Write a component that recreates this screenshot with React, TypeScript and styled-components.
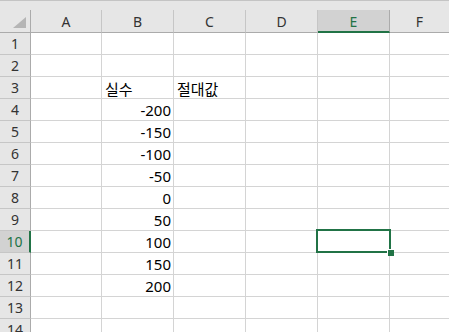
import React from "react";
import styled, {createGlobalStyle} from "styled-components";

const GlobalStyle = createGlobalStyle`
  html, body {
    margin: 0;
    padding: 0;
    background: #ffffff;
    overflow: hidden;
  }
`;

const GREEN = '#217346'

const columns = ['A', 'B', 'C', 'D', 'E', 'F']
const colWidths = [71, 72, 72, 72, 72, 60]

// row number -> values for B and C
const cells: { [row: number]: { B?: string, C?: string, header?: boolean } } = {
    3: {B: '실수', C: '절대값', header: true},
    4: {B: '-200'},
    5: {B: '-150'},
    6: {B: '-100'},
    7: {B: '-50'},
    8: {B: '0'},
    9: {B: '50'},
    10: {B: '100'},
    11: {B: '150'},
    12: {B: '200'},
}

const selectedRow = 10
const selectedCol = 'E'

const Sheet = styled.div`
  width: 449px;
  height: 332px;
  overflow: hidden;
  background: #ffffff;
  font-family: "Noto Sans", "Noto Sans CJK KR", sans-serif;
`;

const TopStrip = styled.div`
  height: 10px;
  background: #e6e6e6;
  border-top: 1px solid #c4c4c4;
  box-sizing: border-box;
`;

const Grid = styled.div`
  display: grid;
  grid-template-columns: 31px ${colWidths.map(w => w + 'px').join(' ')};
  grid-auto-rows: 22px;
  grid-template-rows: 23px;
`;

const Corner = styled.div`
  position: relative;
  background: #e6e6e6;
  border-right: 1px solid #ababab;
  border-bottom: 1px solid #ababab;
  box-sizing: border-box;

  &::after {
    content: '';
    position: absolute;
    right: 4px;
    bottom: 4px;
    width: 0;
    height: 0;
    border-left: 13px solid transparent;
    border-bottom: 11px solid #b5b5b5;
  }
`;

const ColHead = styled.div<{ $active?: boolean }>`
  display: flex;
  align-items: center;
  justify-content: center;
  background: ${p => p.$active ? '#d2d2d2' : '#e6e6e6'};
  border-right: 1px solid ${p => p.$active ? '#ababab' : '#c6c6c6'};
  border-bottom: ${p => p.$active ? `2px solid ${GREEN}` : '1px solid #ababab'};
  box-sizing: border-box;
  padding-top: ${p => p.$active ? '1px' : '0'};
  font-size: 14px;
  color: ${p => p.$active ? GREEN : '#333333'};
`;

const RowHead = styled.div<{ $active?: boolean }>`
  display: flex;
  align-items: center;
  justify-content: center;
  background: ${p => p.$active ? '#d2d2d2' : '#e6e6e6'};
  border-right: ${p => p.$active ? `2px solid ${GREEN}` : '1px solid #ababab'};
  border-bottom: 1px solid #c6c6c6;
  box-sizing: border-box;
  font-size: 14px;
  color: ${p => p.$active ? GREEN : '#333333'};
`;

const Cell = styled.div<{ $align?: 'left' | 'right' }>`
  position: relative;
  display: flex;
  align-items: center;
  justify-content: ${p => p.$align === 'left' ? 'flex-start' : 'flex-end'};
  padding: 1px 2px 0 3px;
  border-right: 1px solid #d4d4d4;
  border-bottom: 1px solid #d4d4d4;
  box-sizing: border-box;
  font-size: 15px;
  color: #000000;
  white-space: nowrap;
`;

const Selection = styled.div`
  position: absolute;
  left: -2px;
  top: -2px;
  right: -2px;
  bottom: -1px;
  border: 2px solid ${GREEN};
  z-index: 2;
`;

const FillHandle = styled.div`
  position: absolute;
  right: -5px;
  bottom: -5px;
  width: 6px;
  height: 6px;
  background: ${GREEN};
  border-left: 1px solid #ffffff;
  border-top: 1px solid #ffffff;
`;

export default function App() {
    const rows = Array.from({length: 14}, (_, i) => i + 1)

    return (
        <Sheet>
            <GlobalStyle/>
            <TopStrip/>
            <Grid>
                <Corner/>
                {columns.map(c => <ColHead key={c} $active={c === selectedCol}>{c}</ColHead>)}
                {rows.map(r => (
                    <React.Fragment key={r}>
                        <RowHead $active={r === selectedRow}>{r}</RowHead>
                        {columns.map(c => {
                            const data = cells[r]
                            const value = data ? (c === 'B' ? data.B : c === 'C' ? data.C : undefined) : undefined
                            return (
                                <Cell key={c} $align={data?.header ? 'left' : 'right'}>
                                    {value}
                                    {r === selectedRow && c === selectedCol && (
                                        <Selection>
                                            <FillHandle/>
                                        </Selection>
                                    )}
                                </Cell>
                            )
                        })}
                    </React.Fragment>
                ))}
            </Grid>
        </Sheet>
    )
}
